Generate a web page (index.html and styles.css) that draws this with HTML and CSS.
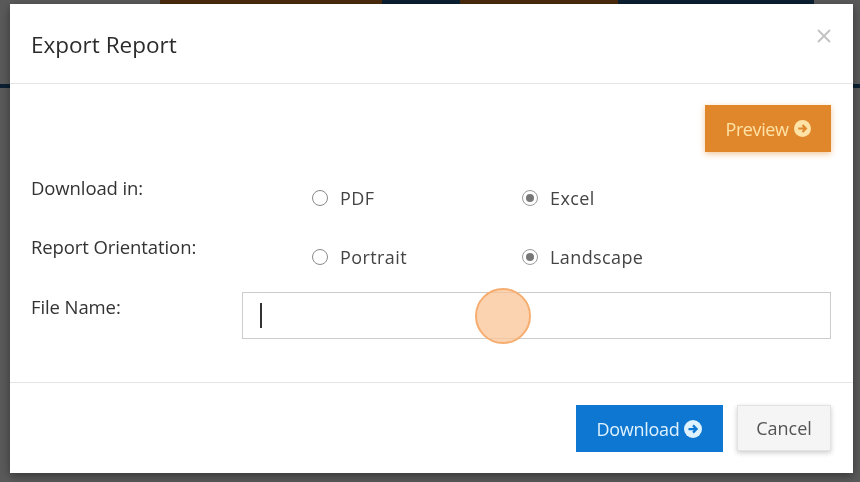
FILE: index.html
```html
<!DOCTYPE html>
<html lang="en">
<head>
    <meta charset="UTF-8">
    <meta name="viewport" content="width=device-width, initial-scale=1.0">
    <title>Export Report</title>
    <link rel="stylesheet" href="styles.css">
</head>
<body>
    <div class="page">
        <div class="tabs">
            <div class="tab tab-gap"></div>
            <div class="tab tab-orange"></div>
            <div class="tab tab-navy"></div>
            <div class="tab tab-orange small"></div>
            <div class="tab tab-navy wide"></div>
        </div>
        <div class="page-line"></div>
    </div>

    <div class="backdrop"></div>

    <div class="modal">
        <div class="modal-header">
            <h4 class="modal-title">Export Report</h4>
            <button class="close" type="button">
                <svg width="16" height="16" viewBox="0 0 16 16"><path d="M2 2 L14 14 M14 2 L2 14" stroke="#c4c4c4" stroke-width="2"/></svg>
            </button>
        </div>

        <div class="modal-body">
            <div class="preview-row">
                <button class="btn btn-orange" type="button">Preview <span class="arrow-icon"><svg width="17" height="17" viewBox="0 0 16 16"><circle cx="8" cy="8" r="8" fill="#ffe3a6"/><path d="M4 8 H11 M8 4.8 L11.2 8 L8 11.2" stroke="#e0862b" stroke-width="2" fill="none"/></svg></span></button>
            </div>

            <div class="form-row row-first">
                <div class="label">Download in:</div>
                <div class="options">
                    <label class="radio"><span class="dot"></span>PDF</label>
                    <label class="radio"><span class="dot checked"></span>Excel</label>
                </div>
            </div>

            <div class="form-row row-second">
                <div class="label">Report Orientation:</div>
                <div class="options">
                    <label class="radio"><span class="dot"></span>Portrait</label>
                    <label class="radio"><span class="dot checked"></span>Landscape</label>
                </div>
            </div>

            <div class="form-row row-file">
                <div class="label">File Name:</div>
                <div class="text-input"><span class="caret"></span></div>
            </div>
        </div>

        <div class="modal-footer">
            <button class="btn btn-blue" type="button">Download <span class="arrow-icon"><svg width="18" height="18" viewBox="0 0 16 16"><circle cx="8" cy="8" r="8" fill="#dff2ff"/><path d="M4 8 H11 M8 4.8 L11.2 8 L8 11.2" stroke="#0e77d1" stroke-width="2" fill="none"/></svg></span></button>
            <button class="btn btn-default" type="button">Cancel</button>
        </div>

        <div class="click-mark"></div>
    </div>
</body>
</html>
```

FILE: styles.css
```css
body {
    margin: 0;
    padding: 0;
    height: 100vh;
    overflow: hidden;
    font-family: "Open Sans", "Liberation Sans", sans-serif;
    background-color: #ffffff;
}

/* page behind the dialog */
.page {
    height: 100%;
}

.tabs {
    display: flex;
    height: 10px;
}

.tab-gap {
    width: 160px;
}

.tab-orange {
    width: 222px;
    background-color: #d57a20;
}

.tab-orange.small {
    width: 158px;
}

.tab-navy {
    width: 78px;
    background-color: #1c5a8e;
}

.tab-navy.wide {
    width: 196px;
}

.page-line {
    margin-top: 74px;
    height: 4px;
    background-color: #1c5a8e;
}

.backdrop {
    position: fixed;
    inset: 0;
    background-color: rgba(0, 0, 0, 0.65);
}

/* dialog */
.modal {
    position: fixed;
    top: 4px;
    left: 10px;
    width: 843px;
    height: 469px;
    background-color: #fff;
    box-shadow: 0 3px 9px rgba(0, 0, 0, 0.4);
    display: flex;
    flex-direction: column;
    color: #333;
}

.modal-header {
    height: 79px;
    flex-shrink: 0;
    border-bottom: 1px solid #e5e5e5;
    display: flex;
    align-items: center;
    justify-content: space-between;
    padding: 0 21px 0 21px;
}

.modal-title {
    margin: 0;
    font-size: 22.5px;
    font-weight: normal;
    color: #2b2b2b;
    padding-top: 2px;
}

.close {
    border: none;
    background: none;
    padding: 0;
    margin-top: -12px;
    cursor: pointer;
}

.modal-body {
    padding: 21px 22px 0 21px;
    border-bottom: 1px solid #e5e5e5;
    box-sizing: border-box;
    height: 299px;
    flex-shrink: 0;
}

.preview-row {
    display: flex;
    justify-content: flex-end;
}

.btn {
    font-family: "Open Sans", "Liberation Sans", sans-serif;
    font-size: 18px;
    border: none;
    height: 47px;
    display: inline-flex;
    align-items: center;
    justify-content: center;
    cursor: pointer;
    padding: 0;
}

.arrow-icon {
    display: inline-flex;
    margin-left: 5px;
}

.btn-orange {
    width: 126px;
    background-color: #e0862b;
    color: #ffe3a6;
    box-shadow: 0 2px 6px rgba(224, 134, 43, 0.45);
    letter-spacing: -0.4px;
}

.form-row {
    display: flex;
}

.label {
    width: 211px;
    flex-shrink: 0;
    font-size: 18.5px;
    line-height: 24px;
    letter-spacing: -0.1px;
}

.row-first {
    margin-top: 24px;
    height: 59px;
}

.row-second {
    height: 57px;
}

.row-file .label {
    padding-top: 3px;
}

.options {
    display: flex;
    align-items: flex-start;
    padding-left: 70px;
    padding-top: 10px;
}

.radio {
    width: 210px;
    display: flex;
    align-items: center;
    font-size: 18px;
    line-height: 24px;
    color: #444;
    letter-spacing: 0.4px;
}

.dot {
    width: 16px;
    height: 16px;
    border: 1px solid #8a8a8a;
    border-radius: 50%;
    box-sizing: border-box;
    margin-right: 12px;
    display: inline-flex;
    align-items: center;
    justify-content: center;
    background-color: #fff;
}

.dot.checked {
    border-color: #9a9a9a;
}

.dot.checked::after {
    content: "";
    width: 8px;
    height: 8px;
    border-radius: 50%;
    background-color: #777;
}

.text-input {
    flex: 1;
    height: 47px;
    border: 1px solid #ccc;
    box-sizing: border-box;
    display: flex;
    align-items: center;
    padding-left: 17px;
}

.caret {
    width: 2px;
    height: 25px;
    background-color: #333;
}

.modal-footer {
    display: flex;
    justify-content: flex-end;
    gap: 14px;
    padding: 22px 22px 0 0;
}

.btn-blue {
    width: 147px;
    background-color: #0e77d1;
    color: #dff2ff;
    letter-spacing: -0.3px;
}

.btn-default {
    width: 94px;
    height: 46px;
    background-color: #f5f5f5;
    color: #555;
    border: 1px solid #e2e2e2;
    box-shadow: 0 2px 5px rgba(0, 0, 0, 0.2);
}

/* click highlight from the recording */
.click-mark {
    position: absolute;
    left: 465px;
    top: 284px;
    width: 52px;
    height: 52px;
    border-radius: 50%;
    border: 2px solid #f5ad70;
    background-color: rgba(251, 196, 150, 0.75);
}
```
